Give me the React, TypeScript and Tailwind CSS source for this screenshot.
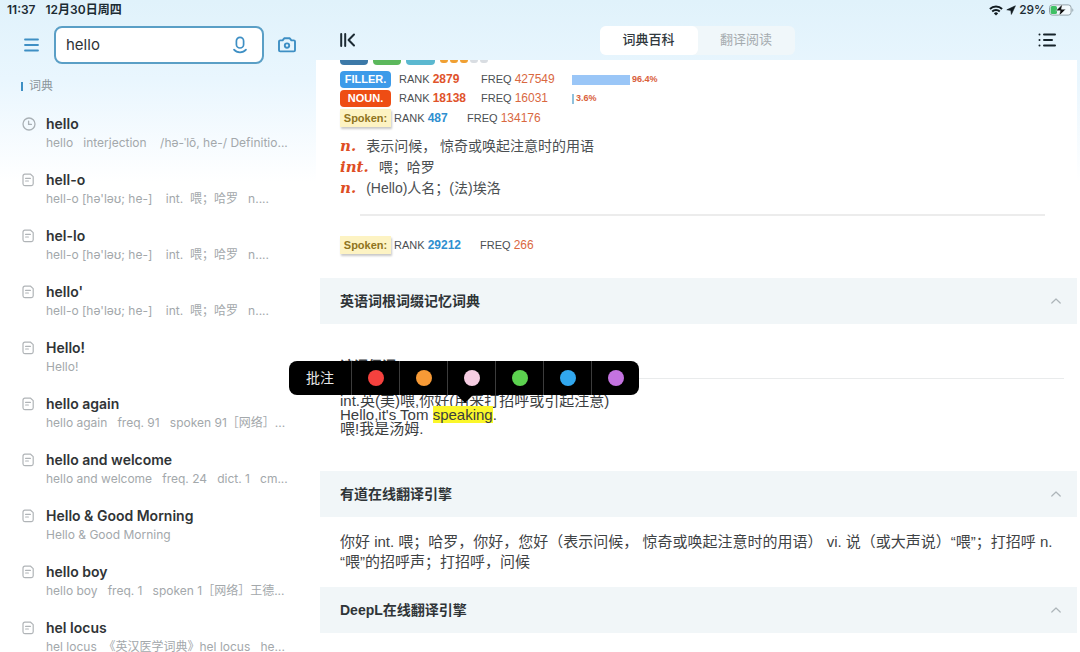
import React from "react";

const latin = "font-['Inter','Noto_Sans_CJK_SC',sans-serif]";
const arial = "font-['Liberation_Sans','Noto_Sans_CJK_SC',sans-serif]";

type Entry = { title: string; note: string; recent?: boolean };

const entries: Entry[] = [
  { title: "hello", note: "hello   interjection    /hə-ˈlō, he-/ Definitio...", recent: true },
  { title: "hell-o", note: "hell-o [hə'ləʊ; he-]    int.  喂；哈罗   n...." },
  { title: "hel-lo", note: "hell-o [hə'ləʊ; he-]    int.  喂；哈罗   n...." },
  { title: "hello'", note: "hell-o [hə'ləʊ; he-]    int.  喂；哈罗   n...." },
  { title: "Hello!", note: "Hello!" },
  { title: "hello again", note: "hello again   freq. 91   spoken 91［网络］..." },
  { title: "hello and welcome", note: "hello and welcome   freq. 24   dict. 1   cm..." },
  { title: "Hello & Good Morning", note: "Hello & Good Morning" },
  { title: "hello boy", note: "hello boy   freq. 1   spoken 1［网络］王德..." },
  { title: "hel locus", note: "hel locus  《英汉医学词典》hel locus   he..." },
];

function ClockIcon() {
  return (
    <svg width="14" height="14" viewBox="0 0 14 14" fill="none" stroke="#a9b0b5" strokeWidth="1.3" strokeLinecap="round">
      <circle cx="7" cy="7" r="6" />
      <path d="M6.6 4.2v3.2h2.8" />
    </svg>
  );
}

function PageIcon() {
  return (
    <svg width="14" height="14" viewBox="0 0 14 14" fill="none" stroke="#b0b4b7" strokeWidth="1.2" strokeLinecap="round" strokeLinejoin="round">
      <path d="M2.8 1.2h5.8l2.6 2.4v7.200a1.8 1.8 0 0 1-1.8 1.8H2.800a1.8 1.8 0 0 1-1.8-1.8V3a1.8 1.8 0 0 1 1.8-1.8z" />
      <path d="M3.6 5.400h4.800M3.600 8h2.800" />
    </svg>
  );
}

function StatusBar() {
  return (
    <div className="flex h-5 shrink-0 items-center justify-between pr-1.5 pl-[7px] text-xs font-semibold text-[#1c2b33]">
      <div className="flex gap-[10px]">
        <span>11:37</span>
        <span>12月30日周四</span>
      </div>
      <div className="flex items-center gap-[3px]">
        <svg width="14" height="11" viewBox="0 0 14 11" fill="none" stroke="#111b20" strokeWidth="1.9">
          <path d="M0.9 4a8.7 8.7 0 0 1 12.2 0M3.2 6.5a5.4 5.4 0 0 1 7.6 0" />
          <path d="M7 10.6 4.9 8.4a3 3 0 0 1 4.2 0z" fill="#111b20" stroke="none" />
        </svg>
        <svg width="10" height="10" viewBox="0 0 10 10" fill="#111b20">
          <path d="M9.4 0.8 0.8 4.8l4 0.6 0.6 4z" stroke="#111b20" strokeWidth="0.6" strokeLinejoin="round" />
        </svg>
        <span className="font-medium">29%</span>
        <svg width="25" height="12" viewBox="0 0 25 12">
          <rect x="0.5" y="0.9" width="21.6" height="10.2" rx="2.8" fill="#f3fafd" stroke="#94a3aa" />
          <rect x="1.6" y="2" width="6.4" height="8" rx="1.6" fill="#3fc065" />
          <path d="M23.3 4.2c1.4.4 1.4 3.2 0 3.6z" fill="#94a3aa" />
          <path d="M13.4 0.2 6.8 6.7h4.4l-1 5.1 6.6-6.6h-4.4z" fill="#111" stroke="#f3fafd" strokeWidth="0.5" />
        </svg>
      </div>
    </div>
  );
}

function Sidebar() {
  return (
    <aside className="flex w-[316px] shrink-0 flex-col">
      <div className="flex h-[50px] shrink-0 items-center pl-6">
        <button type="button" aria-label="菜单">
          <svg width="15" height="14" viewBox="0 0 15 14" stroke="#3e8fc4" strokeWidth="1.8" strokeLinecap="round">
            <path d="M1 1.500h13M1 7h13M1 12.500h13" />
          </svg>
        </button>
        <div className="ml-[15px] flex h-[38px] w-[210px] items-center rounded-lg border-2 border-[#5a9fc6] bg-white pr-3.5 pl-2.5">
          <input
            aria-label="搜索"
            defaultValue="hello"
            className="w-full min-w-0 bg-transparent text-[15px] text-[#2e3336] outline-none"
          />
          <button type="button" aria-label="语音输入">
            <svg width="16" height="18" viewBox="0 0 16 18" fill="none" stroke="#3e8fc4" strokeWidth="1.7" strokeLinecap="round">
              <rect x="4.4" y="1.4" width="7.2" height="10.6" rx="3.6" />
              <path d="M2 13.6c3 3.600 9 3.600 12 0" />
            </svg>
          </button>
        </div>
        <button type="button" aria-label="拍照" className="ml-3.5">
          <svg width="18" height="16" viewBox="0 0 18 16" fill="none" stroke="#3e8fc4" strokeWidth="1.9" strokeLinejoin="round">
            <path d="M1 4.6a1.2 1.2 0 0 1 1.2-1.2h2.4l1.6-2.1h5.6l1.6 2.1h2.4A1.2 1.2 0 0 1 17 4.6v8.6a1.2 1.2 0 0 1-1.2 1.2H2.2A1.2 1.2 0 0 1 1 13.2z" />
            <circle cx="9" cy="8.6" r="2.2" />
          </svg>
        </button>
      </div>
      <div className="flex h-8 shrink-0 items-center gap-1.5 pl-[21px]">
        <span className="h-[9px] w-0.5 bg-[#3e8fc4]" />
        <h2 className="text-xs text-[#8b959b]">词典</h2>
      </div>
      <ul className="pt-3">
        {entries.map((entry) => (
          <li key={entry.title} className="flex h-14 gap-2.5 pl-[22px]">
            <span className="flex h-5 items-center">{entry.recent ? <ClockIcon /> : <PageIcon />}</span>
            <div>
              <h3 className="text-sm leading-5 font-semibold text-[#303436]">{entry.title}</h3>
              <p className="text-xs leading-[18px] whitespace-pre text-[#a3a8ab]">{entry.note}</p>
            </div>
          </li>
        ))}
      </ul>
    </aside>
  );
}

function Rank({ value, tone, className }: { value: string; tone: string; className: string }) {
  return (
    <span className={className}>
      RANK <b className={`text-xs ${tone}`}>{value}</b>
    </span>
  );
}

function Freq({ value, className }: { value: string; className: string }) {
  return (
    <span className={className}>
      FREQ <span className="text-xs text-[#d9683f]">{value}</span>
    </span>
  );
}

function SpokenTag() {
  return (
    <span className="flex h-[18px] w-[51px] items-center justify-center bg-[#fdf3c3] text-[11px] font-bold text-[#8f7420] shadow-[1px_2px_2px_#c9c9c9]">
      Spoken:
    </span>
  );
}

const parts = [
  { tag: "FILLER.", bg: "bg-[#3d9be9]", rank: "2879", freq: "427549", share: 96.4, bar: "bg-[#9ac6f7]" },
  { tag: "NOUN.", bg: "bg-[#ee4d14]", rank: "18138", freq: "16031", share: 3.6, bar: "bg-[#8fc1dd]" },
];

const senses = [
  { pos: "n.", text: "表示问候， 惊奇或唤起注意时的用语" },
  { pos: "int.", text: "喂；哈罗" },
  { pos: "n.", text: "(Hello)人名；(法)埃洛" },
];

function WordProfile() {
  return (
    <section className="h-[218px] shrink-0 pl-6 text-[11px] text-[#4b4f52]">
      <div className="flex h-[5px] gap-[5px]">
        <span className="w-7 rounded-b-sm bg-[#3c79a8]" />
        <span className="w-7 rounded-b-sm bg-[#5cb85c]" />
        <span className="w-[29px] rounded-b-sm bg-[#5bb8d0]" />
        <span className="flex h-[3px] gap-0.5">
          <span className="w-2 rounded-b-full bg-[#f0a033]" />
          <span className="w-2 rounded-b-full bg-[#f0a033]" />
          <span className="w-2 rounded-b-full bg-[#f0a033]" />
          <span className="w-2 rounded-b-full bg-[#d9dde2]" />
          <span className="w-2 rounded-b-full bg-[#d9dde2]" />
        </span>
      </div>
      <div className="flex flex-col gap-0.5 pt-1.5">
        {parts.map((part) => (
          <div key={part.tag} className="flex h-[17px] items-center">
            <span className={`flex h-[17px] w-[51px] items-center justify-center rounded-sm font-bold text-white ${part.bg}`}>
              {part.tag}
            </span>
            <Rank value={part.rank} tone="text-[#e0532b]" className="ml-2 w-[82px]" />
            <Freq value={part.freq} className="w-[91px]" />
            <span className={`h-2.5 ${part.bar}`} style={{ width: `${Math.round(part.share * 0.6)}px` }} />
            <b className="ml-0.5 text-[9px] text-[#d9603a]">{part.share}%</b>
          </div>
        ))}
      </div>
      <div className="mt-0.5 flex h-[18px] items-center">
        <SpokenTag />
        <Rank value="487" tone="text-[#2f8fd0]" className="ml-[3px] w-[73px]" />
        <Freq value="134176" className="" />
      </div>
      <dl className="pt-2 text-sm">
        {senses.map((sense) => (
          <div key={sense.text} className="flex h-[21px] items-center gap-2.5">
            <dt className="font-['DejaVu_Serif',serif] text-[15px] leading-5 font-bold text-[#de4e24] italic">{sense.pos}</dt>
            <dd>{sense.text}</dd>
          </div>
        ))}
      </dl>
      <hr className="mt-4 mr-8 ml-5 border-t-2 border-[#ececec]" />
      <div className="mt-5 flex h-[18px] items-center">
        <SpokenTag />
        <Rank value="29212" tone="text-[#2f8fd0]" className="ml-[3px] w-[86px]" />
        <Freq value="266" className="" />
      </div>
    </section>
  );
}

function SectionBar({ title }: { title: string }) {
  return (
    <h2 className="ml-1 shrink-0">
      <button type="button" className="flex h-[46px] w-full items-center justify-between bg-[#f1f6f8] pr-4 pl-5 text-left text-sm font-bold text-[#2f3437]">
        {title}
        <svg width="10" height="6" viewBox="0 0 10 6" fill="none" stroke="#adb5b9" strokeWidth="1.2" strokeLinecap="round" strokeLinejoin="round">
          <path d="M0.8 5 5 1l4.2 4" />
        </svg>
      </button>
    </h2>
  );
}

const colours = [
  { name: "红色", fill: "bg-[#f5413e]" },
  { name: "橙色", fill: "bg-[#f79a36]" },
  { name: "粉色", fill: "bg-[#f6cde2]" },
  { name: "绿色", fill: "bg-[#5cd24f]" },
  { name: "蓝色", fill: "bg-[#31a7ee]" },
  { name: "紫色", fill: "bg-[#c473e0]" },
];

function HighlightMenu() {
  return (
    <div role="toolbar" aria-label="批注颜色" className="absolute top-[37px] -left-[27px] z-10 flex h-[34px] rounded-lg bg-black">
      <button type="button" className="w-[62px] text-sm text-[#e8e8e8]">批注</button>
      {colours.map((colour) => (
        <button key={colour.name} type="button" aria-label={colour.name} className="flex w-12 items-center justify-center border-l border-[#3c3c3c]">
          <span className={`size-4 rounded-full ${colour.fill}`} />
        </button>
      ))}
      <svg width="16" height="8" viewBox="0 0 16 8" className="absolute top-[34px] left-[168px]">
        <path d="M0 0h16L8 8z" fill="#000" />
      </svg>
    </div>
  );
}

function RootsEntry() {
  return (
    <section className="relative h-[147px] shrink-0 pr-[13px] pl-6 text-[15px] leading-[14px] text-[#3a3d3f]">
      <HighlightMenu />
      <h3 className="pt-[35px] text-sm leading-[14px] font-bold">谚语俚语</h3>
      <hr className="mt-[5px] mb-[15px] border-[#e9ebec]" />
      <p>int.英(美)喂,你好(用来打招呼或引起注意)</p>
      <p>Hello,it's Tom <mark className="bg-[#fbf72a] text-inherit">speaking</mark>.</p>
      <p>喂!我是汤姆.</p>
    </section>
  );
}

function Reader() {
  return (
    <main className="flex min-w-0 flex-1 flex-col">
      <header className="flex h-10 shrink-0 items-center justify-between pr-6 pl-6">
        <button type="button" aria-label="收起侧栏">
          <svg width="16" height="14" viewBox="0 0 16 14" fill="none" stroke="#1d2b33" strokeWidth="2" strokeLinecap="round" strokeLinejoin="round">
            <path d="M1.2 1v12M5.2 1v12M14 1.500 8.600 7l5.400 5.500" />
          </svg>
        </button>
        <div className="flex rounded-md bg-[#f0f7fa] text-[13px]">
          <button type="button" className="h-[29px] w-[98px] rounded-md bg-white font-medium text-[#30383d]">词典百科</button>
          <button type="button" className="h-[29px] w-[97px] text-[#a5abaf]">翻译阅读</button>
        </div>
        <button type="button" aria-label="目录">
          <svg width="18" height="14" viewBox="0 0 18 14" stroke="#16232a" strokeWidth="2" strokeLinecap="round">
            <path d="M1.500 1.500h.01M1.500 7h.01M1.500 12.500h.01M6 1.500h11M6 7h8M6 12.500h11" />
          </svg>
        </button>
      </header>
      <div className={`mr-[3px] flex flex-1 flex-col bg-white ${arial}`}>
        <WordProfile />
        <SectionBar title="英语词根词缀记忆词典" />
        <RootsEntry />
        <SectionBar title="有道在线翻译引擎" />
        <p className="min-h-[70px] shrink-0 pt-[15px] pr-3 pl-6 text-[15px] leading-5 text-[#3f4345]">
          你好 int. 喂；哈罗，你好，您好（表示问候， 惊奇或唤起注意时的用语） vi. 说（或大声说）“喂”；打招呼 n.
          <br />
          “喂”的招呼声；打招呼，问候
        </p>
        <SectionBar title="DeepL在线翻译引擎" />
      </div>
    </main>
  );
}

export default function App() {
  return (
    <div className={`flex h-screen flex-col overflow-hidden bg-white bg-linear-to-b from-[#e0f2fb] via-[#e9f6fe] via-12% to-white to-28% ${latin}`}>
      <StatusBar />
      <div className="flex min-h-0 flex-1">
        <Sidebar />
        <Reader />
      </div>
    </div>
  );
}
